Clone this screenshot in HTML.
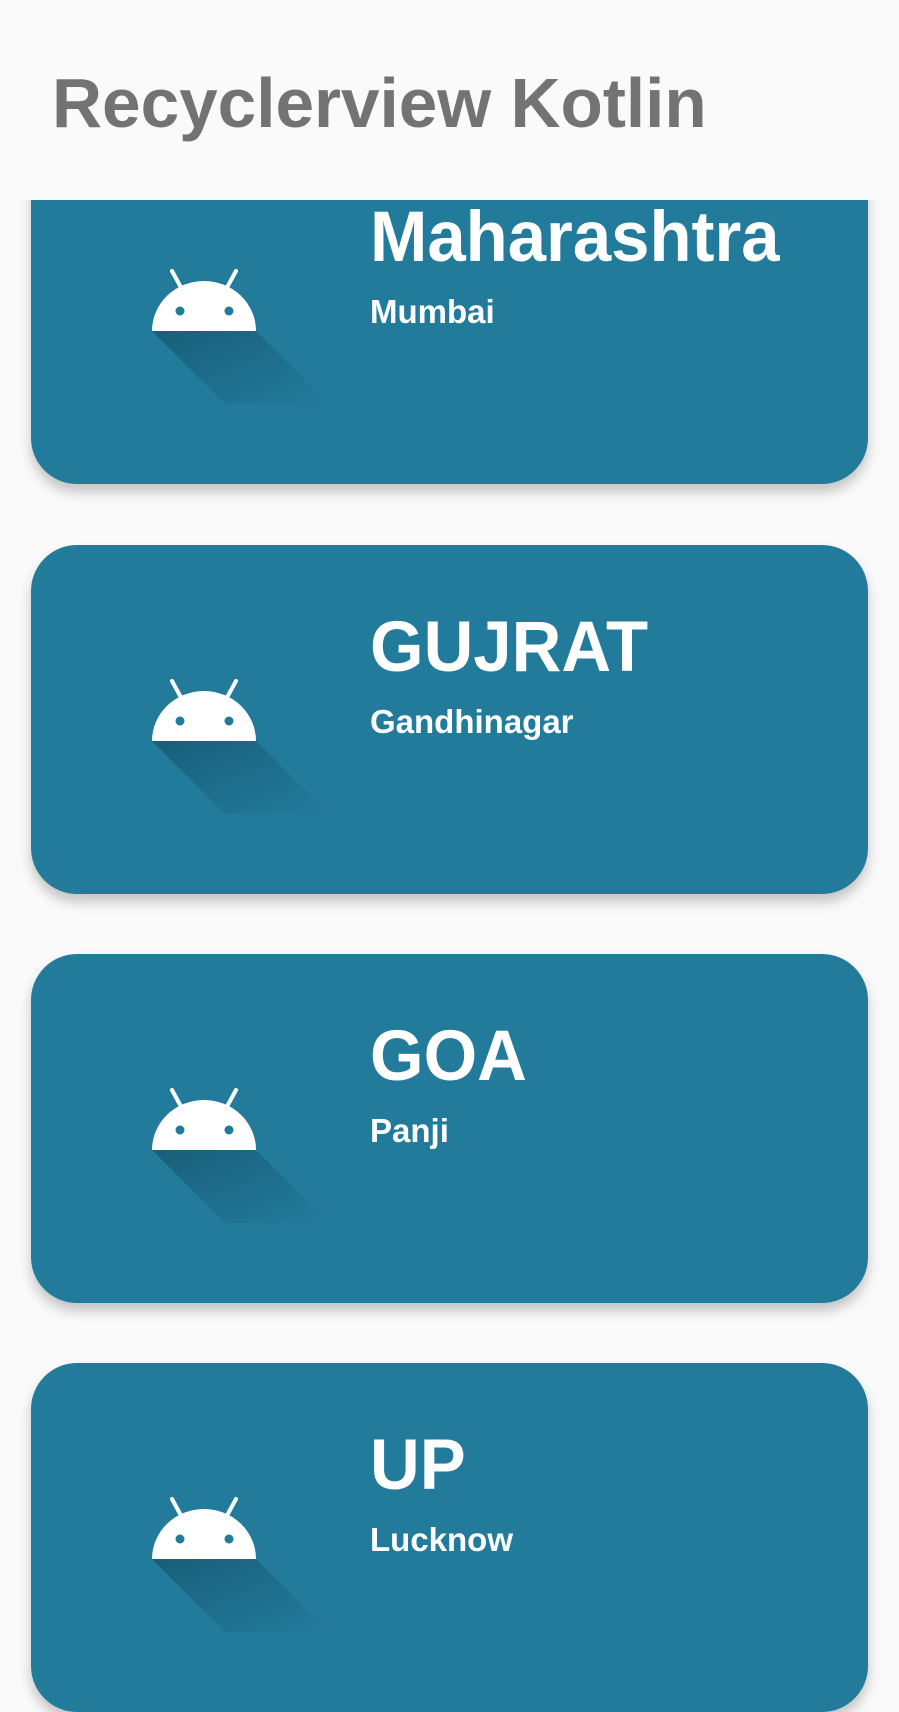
<!DOCTYPE html>
<html><head><meta charset="utf-8"><style>
html,body{margin:0;padding:0;width:899px;height:1599px;overflow:hidden;background:#fafafa;font-family:"Liberation Sans",Arial,sans-serif;}
.hdr{position:absolute;left:0;top:0;width:899px;height:200px;background:#fafafa;z-index:5;}
.hdr span{position:absolute;left:52px;top:68px;font-size:70px;font-weight:bold;color:#737373;line-height:1;transform-origin:0 0;transform:scaleX(0.99);white-space:nowrap;}
.card{position:absolute;left:31px;width:837px;height:349px;background:#237b9c;border-radius:46px;box-shadow:0 8px 12px rgba(0,0,0,0.22);overflow:hidden;}
.t{position:absolute;left:339px;top:67px;font-size:71px;font-weight:bold;color:#fff;line-height:1;transform-origin:0 0;transform:scaleX(0.97);white-space:nowrap;}
.s{position:absolute;left:339px;top:160px;font-size:33px;font-weight:bold;color:#fff;line-height:1;transform-origin:0 0;transform:scaleX(1);white-space:nowrap;}
.ic{position:absolute;left:113px;top:130px;}
</style></head><body>
<div class="hdr"><span>Recyclerview Kotlin</span></div>

<svg width="0" height="0" style="position:absolute"><defs>
<linearGradient id="sh" x1="0" y1="0" x2="1" y2="1"><stop offset="0" stop-color="#0a3d52" stop-opacity="0.45"/><stop offset="1" stop-color="#0a3d52" stop-opacity="0"/></linearGradient>
<g id="and">
<path d="M8 66 L112 66 L185 139 L81 139 Z" fill="url(#sh)"/>
<path d="M28 6 L40 28 M92 6 L80 28" stroke="#fff" stroke-width="4" stroke-linecap="round"/>
<path d="M8 66 A52 50 0 0 1 112 66 Z" fill="#fff"/>
<circle cx="36" cy="46" r="4.5" fill="#237b9c"/><circle cx="85" cy="46" r="4.5" fill="#237b9c"/>
</g></defs></svg>

<div class="card" style="top:135px"><svg class="ic" width="220" height="220"><use href="#and"/></svg><div class="t">Maharashtra</div><div class="s">Mumbai</div></div>
<div class="card" style="top:545px"><svg class="ic" width="220" height="220"><use href="#and"/></svg><div class="t">GUJRAT</div><div class="s">Gandhinagar</div></div>
<div class="card" style="top:954px"><svg class="ic" width="220" height="220"><use href="#and"/></svg><div class="t">GOA</div><div class="s">Panji</div></div>
<div class="card" style="top:1363px"><svg class="ic" width="220" height="220"><use href="#and"/></svg><div class="t">UP</div><div class="s">Lucknow</div></div>
</body></html>
